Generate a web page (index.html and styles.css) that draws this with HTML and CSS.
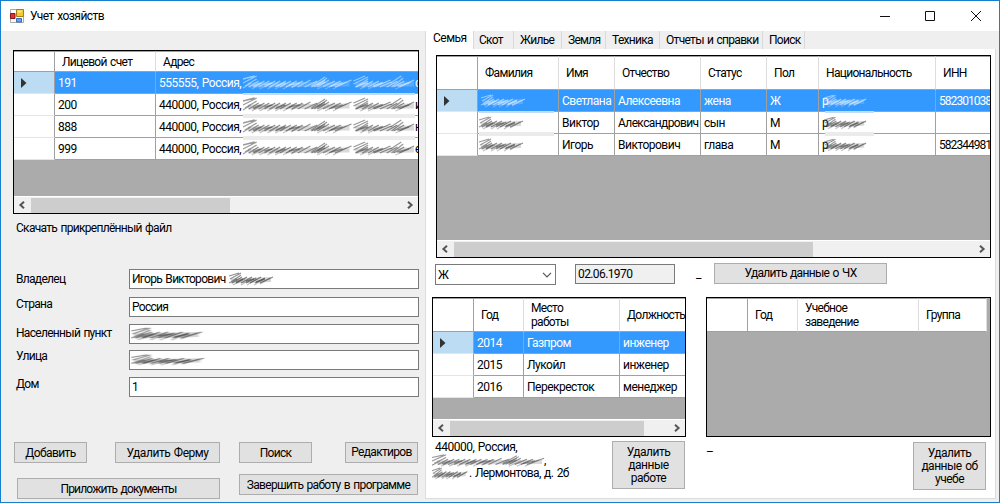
FILE: index.html
```html
<!DOCTYPE html>
<html lang="ru">
<head>
<meta charset="utf-8">
<title>Учет хозяйств</title>
<link rel="stylesheet" href="styles.css">
</head>
<body>
<svg class="defs" width="0" height="0">
  <defs>
    <filter id="soft" x="-5%" y="-20%" width="110%" height="140%"><feGaussianBlur stdDeviation="0.7"/></filter>
    <symbol id="word" viewBox="0 0 46 14">
      <g fill="none" stroke="currentColor" filter="url(#soft)">
        <path stroke-width="5" opacity=".22" d="M2 9L42 7.500"/>
        <path stroke-width="1.2" opacity=".6" d="M0 4L10 1M1 7L12 1M2 10L12 3M0 11L8 7"/>
        <path stroke-width="1.3" opacity=".65" d="M3 11L13 5M7 11L18 5M12 11L23 5M17 11L27 6M21 11L32 5M26 11L36 6M31 11L44 5"/>
        <path stroke-width="1.5" opacity=".6" d="M7 10L14 7M17 9L25 7M27 10L36 7"/>
        <path stroke-width="1.2" opacity=".35" d="M4 13L16 7M12 13L22 7M18 13L28 7M25 13L35 7M31 12L41 6"/>
      </g>
    </symbol>
    <symbol id="phrase" viewBox="0 0 176 15">
      <g fill="none" stroke="currentColor" filter="url(#soft)">
        <path stroke-width="5" opacity=".22" d="M5 10L109 9M115 10L175 9"/>
        <path stroke-width="1.3" opacity=".6" d="M0 4L12 1M0 8L14 1M2 11L14 4M0 13L8 8M70 11L84 2M73 12L86 3M113 6L125 1M113 9L128 2M115 12L128 4M151 8L162 1M152 12L164 3"/>
        <path stroke-width="1.3" opacity=".65" d="M6 12L16 6M11 12L22 6M16 12L27 6M22 12L33 6M27 12L38 6M33 12L44 6M38 12L49 6M44 12L55 6M50 12L61 6M56 12L69 5M63 12L76 6M70 12L84 5M76 12L88 5M82 12L94 6M88 12L100 6M94 12L111 5M116 12L128 6M122 12L133 6M128 12L139 6M134 12L151 5M140 12L152 7M147 12L158 6M154 12L165 6M160 12L175 5"/>
        <path stroke-width="1.5" opacity=".6" d="M10 11L18 8M22 10L30 8M34 11L43 8M47 10L58 8M76 10L84 7M90 11L102 8M120 10L128 8M133 11L143 8M158 11L170 8"/>
        <path stroke-width="1.3" opacity=".35" d="M9 14L20 8M17 14L28 8M25 14L36 8M33 14L44 8M41 14L52 8M49 13L62 7M76 14L88 8M84 14L96 8M92 14L106 7M120 14L132 8M128 14L143 7M156 14L172 7"/>
      </g>
    </symbol>
    <symbol id="left" viewBox="0 0 8 8"><path d="M6 .8L2.4 4L6 7.2" fill="none" stroke="#555" stroke-width="2"/></symbol>
    <symbol id="right" viewBox="0 0 8 8"><path d="M2 .8L5.6 4L2 7.2" fill="none" stroke="#555" stroke-width="2"/></symbol>
    <symbol id="current" viewBox="0 0 6 10"><path d="M0 0L5.5 5L0 10Z" fill="#333"/></symbol>
  </defs>
</svg>
<div class="window">
  <header class="titlebar">
    <svg class="app-icon" width="14" height="14" viewBox="0 0 14 14"><path d="M.5.5h13v13H.5z" fill="#fff" stroke="#aaa"/><path d="M6.5.5h7v7h-7z" fill="#f8c62e" stroke="#a87f16"/><path d="M7.5 1.5h4v2h-4z" fill="#ffe694"/><path d="M.5 4.500h4.500v5H.5z" fill="#d33" stroke="#8a1518"/><path d="M6.500 9.500h5v3.500h-5z" fill="#68a4ee" stroke="#346bbd"/></svg>
    <h1>Учет хозяйств</h1>
    <svg class="controls" width="104" height="12" viewBox="0 0 104 12" fill="none" stroke="#111"><path d="M0 6.500h10M45.500 1.500h9v9h-9zM91 1l10 10M101 1L91 11"/></svg>
  </header>
  <main>
    <section class="left">
      <div class="grid farms">
        <div class="row head"><i></i><b>Лицевой счет</b><b>Адрес</b></div>
        <div class="row sel"><i><svg width="6" height="10"><use href="#current"/></svg></i><span>191</span><span class="addr"><em>555555, Россия,</em><svg width="172" height="15" viewBox="0 0 176 15" preserveAspectRatio="none"><use href="#phrase" width="176" height="15"/></svg>с</span><u class="patch"></u></div>
        <div class="row"><i></i><span>200</span><span class="addr"><em>440000, Россия,</em><svg width="172" height="15" viewBox="0 0 176 15" preserveAspectRatio="none"><use href="#phrase" width="176" height="15"/></svg>и</span><u class="patch"></u></div>
        <div class="row"><i></i><span>888</span><span class="addr"><em>440000, Россия,</em><svg width="172" height="15" viewBox="0 0 176 15" preserveAspectRatio="none"><use href="#phrase" width="176" height="15"/></svg>н</span><u class="patch"></u></div>
        <div class="row"><i></i><span>999</span><span class="addr"><em>440000, Россия,</em><svg width="172" height="15" viewBox="0 0 176 15" preserveAspectRatio="none"><use href="#phrase" width="176" height="15"/></svg>е</span></div>
        <div class="scroll"><svg width="8" height="8"><use href="#left"/></svg><div class="thumb"></div><svg width="8" height="8"><use href="#right"/></svg></div>
      </div>
      <p class="download">Скачать прикреплённый файл</p>
      <div class="form">
        <div class="field f1"><label>Владелец</label><div class="input">Игорь Викторович<svg width="46" height="14"><use href="#word"/></svg></div></div>
        <div class="field f2"><label>Страна</label><div class="input">Россия</div></div>
        <div class="field f3"><label>Населенный пункт</label><div class="input blurred"><svg width="74" height="14" viewBox="0 0 46 14" preserveAspectRatio="none"><use href="#word" width="46" height="14"/></svg></div></div>
        <div class="field f4"><label>Улица</label><div class="input blurred"><svg width="76" height="12" viewBox="0 0 46 14" preserveAspectRatio="none"><use href="#word" width="46" height="14"/></svg></div></div>
        <div class="field f5"><label>Дом</label><div class="input">1</div></div>
      </div>
      <div class="actions">
        <button class="add">Добавить</button><button class="del">Удалить Ферму</button><button class="find">Поиск</button><button class="edit">Редактиров</button>
      </div>
      <div class="actions2"><button class="attach">Приложить документы</button><button class="finish">Завершить работу в программе</button></div>
    </section>
    <section class="right">
      <nav><a class="active t1">Семья</a><a class="t2">Скот</a><a class="t3">Жилье</a><a class="t4">Земля</a><a class="t5">Техника</a><a class="t6">Отчеты и справки</a><a class="t7">Поиск</a></nav>
      <div class="page">
        <div class="grid family">
          <div class="row head"><i></i><b>Фамилия</b><b>Имя</b><b>Отчество</b><b>Статус</b><b>Пол</b><b>Национальность</b><b>ИНН</b></div>
          <div class="row sel"><i><svg width="6" height="10"><use href="#current"/></svg></i><span class="name"><svg width="50" height="14"><use href="#word"/></svg></span><span>Светлана</span><span>Алексеевна</span><span>жена</span><span>Ж</span><span class="nation">р<svg width="44" height="14"><use href="#word"/></svg></span><span class="inn">582301038</span><u class="patch"></u><u class="patch second"></u></div>
          <div class="row"><i></i><span class="name"><svg width="46" height="14"><use href="#word"/></svg></span><span>Виктор</span><span class="long">Александрович</span><span>сын</span><span>М</span><span class="nation">р<svg width="44" height="14"><use href="#word"/></svg></span><span></span><u class="patch"></u><u class="patch second"></u></div>
          <div class="row"><i></i><span class="name"><svg width="46" height="14"><use href="#word"/></svg></span><span>Игорь</span><span>Викторович</span><span>глава</span><span>М</span><span class="nation">р<svg width="44" height="14"><use href="#word"/></svg></span><span class="inn">582344981</span></div>
          <div class="scroll"><svg width="8" height="8"><use href="#left"/></svg><div class="thumb"></div><svg width="8" height="8"><use href="#right"/></svg></div>
        </div>
        <div class="person">
          <div class="combo">Ж<svg width="10" height="6" viewBox="0 0 10 6"><path d="M1 .8l4 4l4-4" fill="none" stroke="#555" stroke-width="1.2"/></svg></div>
          <div class="date">02.06.1970</div><span class="mark">_</span><button>Удалить данные о ЧХ</button>
        </div>
        <div class="lower">
          <div class="work">
            <div class="grid jobs">
              <div class="row head"><i></i><b>Год</b><b>Место<br>работы</b><b>Должность</b></div>
              <div class="row sel"><i><svg width="6" height="10"><use href="#current"/></svg></i><span>2014</span><span>Газпром</span><span>инженер</span></div>
              <div class="row"><i></i><span>2015</span><span>Лукойл</span><span>инженер</span></div>
              <div class="row"><i></i><span>2016</span><span>Перекресток</span><span>менеджер</span></div>
              <div class="scroll"><svg width="8" height="8"><use href="#left"/></svg><div class="thumb"></div><svg width="8" height="8"><use href="#right"/></svg></div>
            </div>
            <div class="below">
              <div class="address"><div>440000, Россия,</div><div class="line2"><svg width="112" height="13" viewBox="0 0 111 15" preserveAspectRatio="none"><use href="#phrase" width="176" height="15"/></svg>,</div><div class="line3"><svg width="37" height="13" viewBox="0 0 46 14" preserveAspectRatio="none"><use href="#word" width="46" height="14"/></svg><span>. Лермонтова, д. 2б</span></div></div>
              <button>Удалить<br>данные<br>работе</button>
            </div>
          </div>
          <div class="study">
            <div class="grid schools"><div class="row head"><i></i><b>Год</b><b>Учебное<br>заведение</b><b>Группа</b></div></div>
            <div class="below"><span class="dash">–</span><button>Удалить<br>данные об<br>учебе</button></div>
          </div>
        </div>
      </div>
    </section>
  </main>
</div>
</body>
</html>
```
FILE: styles.css
```css
* { box-sizing: border-box; }
body { margin: 0; font: 12px/14px Roboto, "Liberation Sans", sans-serif; letter-spacing: -0.7px; word-spacing: 1px; color: #000; }
svg { flex: none; display: block; }
.defs { position: absolute; }
.window { width: 1000px; height: 503px; border: 1px solid #187fcf; background: #efefef; overflow: hidden; }
.titlebar { height: 30px; background: #fff; display: flex; align-items: center; padding: 0 15px 0 9px; }
h1 { font-size: 12px; font-weight: 400; margin: 0 auto 0 6px; letter-spacing: -0.55px; }
main { display: flex; height: 471px; }
.left { width: 424px; padding: 19px 0 0 12px; }
.right { width: 571px; }

.grid { border: 1px solid #000; background: #ababab; overflow: hidden; display: flex; flex-direction: column; }
.row { display: grid; grid-template-columns: var(--cols); height: 22px; flex: none; position: relative; }
.row > i, .row > b, .row > span { background: #fff; border-right: 1px solid #a0a0a0; border-bottom: 1px solid #a0a0a0; display: flex; align-items: center; padding: 0 0 0 3px; white-space: nowrap; overflow: hidden; font-weight: 400; font-style: normal; letter-spacing: -0.5px; }
.row > i { border-bottom-color: #e5e5e5; }
.row.head > * { border-right-color: #ddd; padding-left: 7px; border-top: 1px solid #a0a0a0; letter-spacing: -0.68px; }
.row.head > i { border-bottom-color: #a0a0a0; border-right-color: #a0a0a0; }
.row.sel > span { background: #3399ff; color: #fff; }
.row.sel > i { background: #bcdcf4; padding-left: 7px; }
.row svg { color: #555; }
.row.sel span svg { color: #d3e9ff; }
.row > span.inn { letter-spacing: -0.95px; }
.row > span.long { letter-spacing: -0.62px; }
.patch { position: absolute; left: 229px; width: 172px; top: 20px; height: 4px; background: #ebebeb; z-index: 1; }
.sel .patch { background: #c3dcf4; height: 2px; top: 21px; }
.family .patch { left: 42px; width: 75px; }
.family .patch.second { left: 388px; width: 49px; }
.scroll { margin-top: auto; height: 17px; background: #f0f0f0; border-top: 1px solid #fff; display: flex; align-items: center; justify-content: space-between; padding: 0 4px; flex: none; }
.thumb { background: #cdcdcd; height: 15px; margin: 0 auto 0 5px; }

.farms { width: 406px; height: 164px; --cols: 41px 101px 263px; }
.farms .head { height: 21px; }
.farms .thumb { width: 199px; }
.addr em { width: 84px; flex: none; font-style: normal; }
.download { margin: 7px 0 0 3px; }
.form { margin-top: 34px; }
.field { display: flex; height: 20px; align-items: center; margin-left: 3px; }
.field label { width: 113px; }
.input { width: 290px; height: 20px; background: #fff; border: 1px solid #7a7a7a; padding-left: 2px; display: flex; align-items: center; }
.input svg { margin-left: 3px; color: #444; }
.input.blurred svg { margin-left: -1px; }
.f2 { margin-top: 8px; }
.f2 label { padding-bottom: 6px; }
.f3 { margin-top: 7px; }
.f3 label { padding-bottom: 2px; }
.f4 { margin-top: 6px; }
.f4 label { padding-bottom: 8px; }
.f5 { margin-top: 7px; }
.f5 label { padding-bottom: 6px; }

button { font: inherit; letter-spacing: -0.68px; color: #000; background: #e1e1e1; border: 1px solid #adadad; border-radius: 0; padding: 1px 0 0; height: 21px; line-height: 13px; white-space: nowrap; word-spacing: 1px; }
.actions { display: flex; margin: 45px 0 0 1px; }
.add, .find, .edit { width: 73px; }
.del { width: 105px; margin: 0 19px 0 28px; letter-spacing: -0.45px; }
.add { letter-spacing: -0.6px; }
.edit { margin-left: 33px; padding: 0; }
.actions2 { display: flex; margin: 11px 0 0 4px; }
.attach { width: 203px; margin-top: 4px; letter-spacing: -0.82px; }
.finish { width: 179px; margin-left: 19px; }

nav { display: flex; height: 18px; }
nav a { border-right: 1px solid #d9d9d9; padding: 2px 0 0 5px; white-space: nowrap; }
nav .active { background: #fff; padding: 0 0 0 7px; border-left: 1px solid #d9d9d9; letter-spacing: -0.5px; }
.t1 { width: 49px; }
.t2 { width: 40px; }
.t3 { width: 48px; }
nav .t3, nav .t4, nav .t5, nav .t6, nav .t7 { padding-left: 6px; }
.t4 { width: 44px; }
.t5 { width: 54px; }
.t6 { width: 103px; }
.t7 { width: 42px; }
.page { height: 450px; border: 1px solid #dcdcdc; border-top: 0; background: #fff; padding-top: 6px; }
.family { width: 555px; height: 203px; margin-left: 10px; --cols: 41px 81px 56px 86px 66px 52px 117px 60px; }
.family .head, .jobs .head, .schools .head { height: 34px; }
.family .thumb { width: 359px; }
.row > span.name { padding-left: 1px; }
.nation svg { margin-left: -4px; }
.person { display: flex; margin: 5px 0 0 9px; height: 21px; }
.combo { width: 121px; height: 21px; margin-top: 1px; border: 1px solid #7a7a7a; display: flex; align-items: center; justify-content: space-between; padding: 0 3px 0 2px; }
.date { width: 100px; height: 20px; margin: 1px 21px 0 19px; border: 1px solid #7a7a7a; background: #f0f0f0; padding: 2px; letter-spacing: -0.6px; }
.mark { width: 18px; padding-top: 4px; }
.person button { width: 173px; padding: 0; }
.lower { display: flex; margin: 13px 0 0 6px; gap: 20px; }
.jobs { width: 254px; height: 140px; --cols: 41px 50px 96px 66px; }
.jobs .thumb { width: 194px; }
.schools { width: 285px; height: 140px; --cols: 41px 50px 121px 68px; }
.below { display: flex; justify-content: space-between; align-items: flex-start; }
.below button { width: 73px; height: 48px; margin: 4px 1px 0 0; letter-spacing: -0.5px; }
.address { padding: 4px 0 0 3px; line-height: 13px; letter-spacing: -0.5px; }
.line2, .line3 { display: flex; }
.line3 span { letter-spacing: -0.6px; }
.address svg { color: #555; margin-left: -3px; }
.dash { padding-top: 8px; }
.study .below button { margin: 5px 5px 0 0; }
```
